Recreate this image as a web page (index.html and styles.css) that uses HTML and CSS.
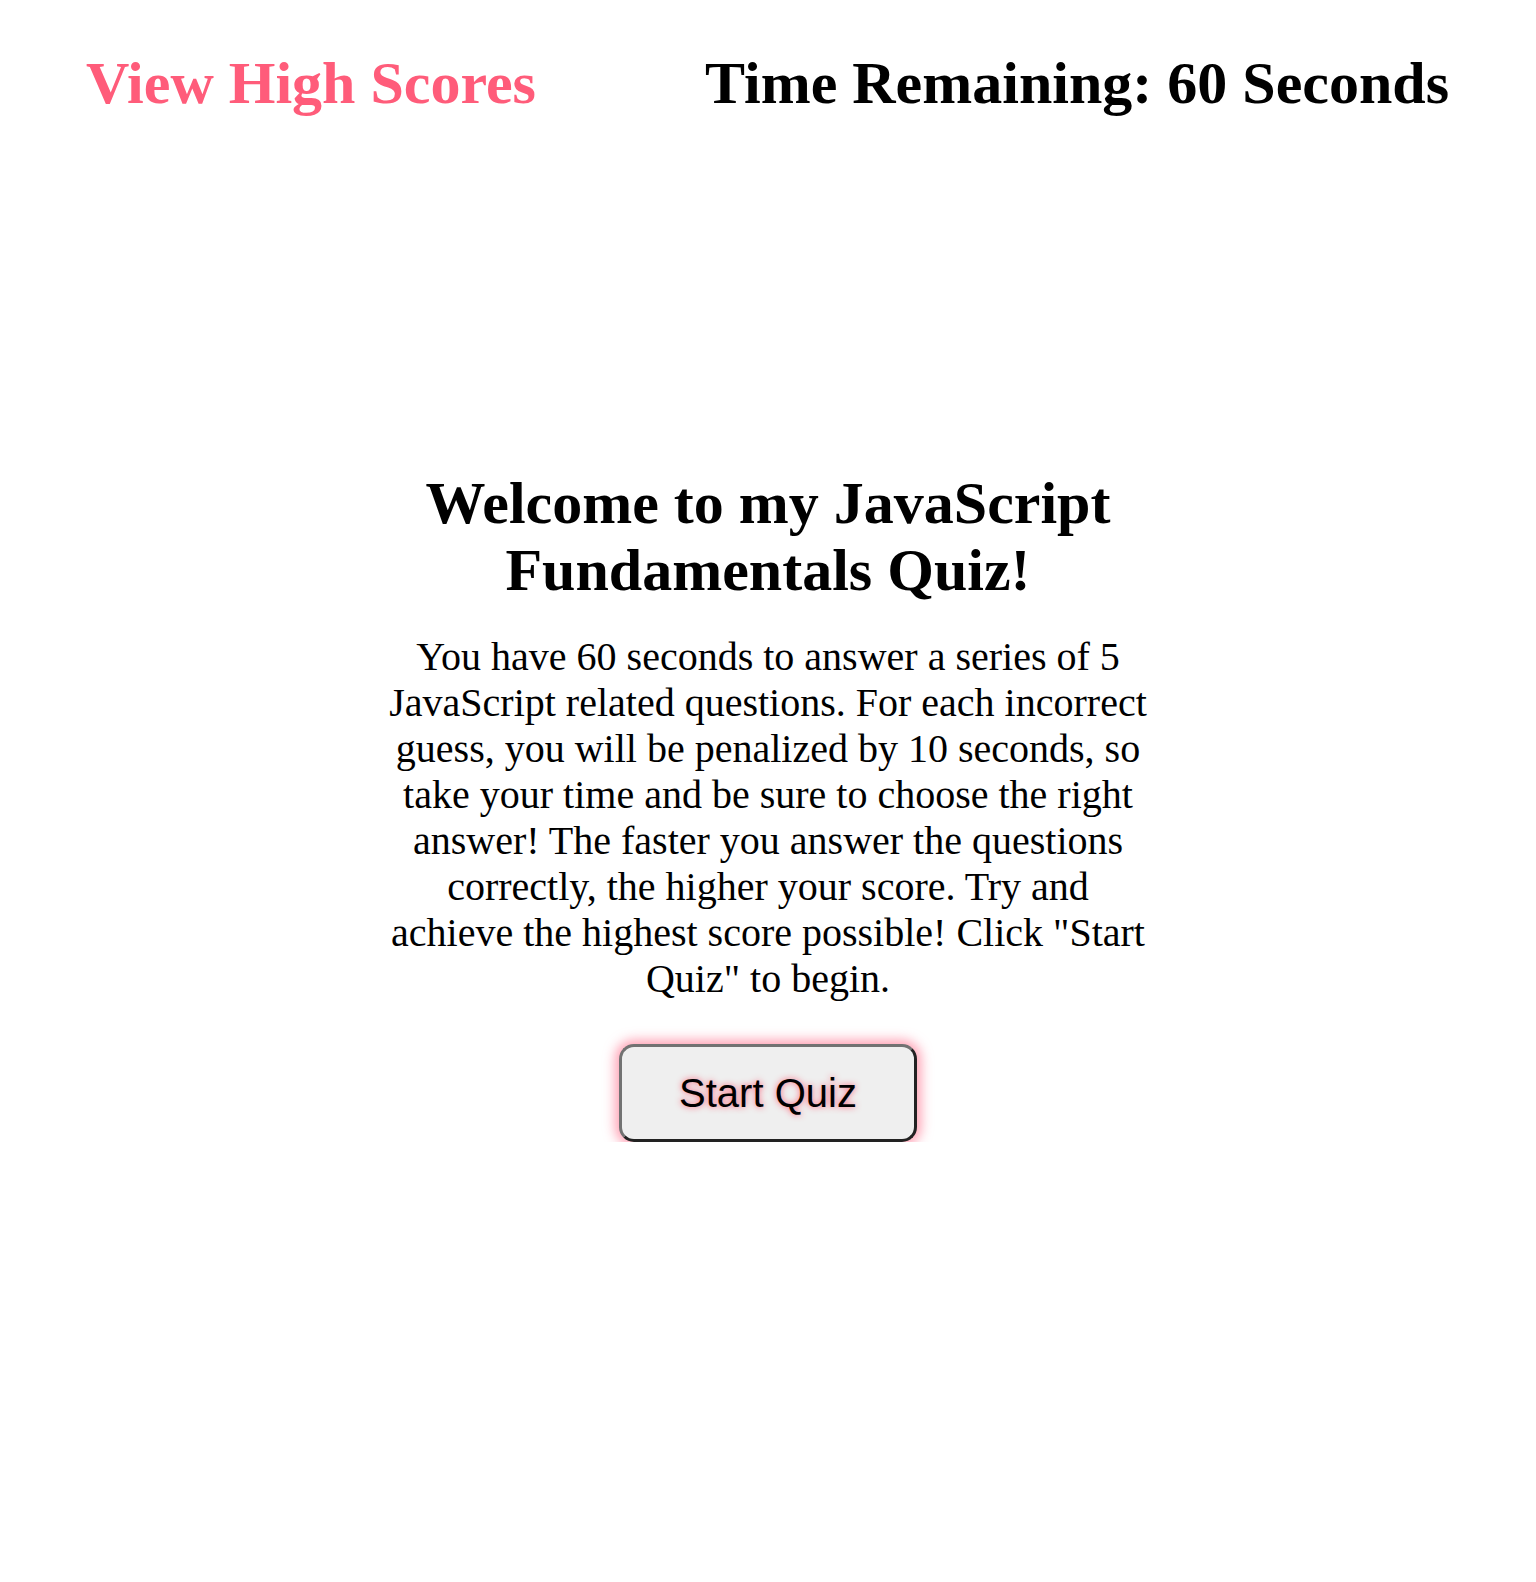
FILE: index.html
```html
<!DOCTYPE html>
<html>
<head>
<meta charset="utf-8">
<link rel="stylesheet" href="styles.css">
</head>
<body>
<header class="top">
  <a class="scores">View High Scores</a>
  <div class="timer">Time Remaining: 60 Seconds</div>
</header>
<main class="intro">
  <h1 class="title">Welcome to my JavaScript Fundamentals Quiz!</h1>
  <p class="desc">You have 60 seconds to answer a series of 5 JavaScript related questions. For each incorrect guess, you will be penalized by 10 seconds, so take your time and be sure to choose the right answer! The faster you answer the questions correctly, the higher your score. Try and achieve the highest score possible! Click "Start Quiz" to begin.</p>
  <button class="start">Start Quiz</button>
</main>
</body>
</html>
```
FILE: styles.css
```css
body {
  margin: 0;
  font-family: "Liberation Serif", "Times New Roman", serif;
  background: #fff;
  color: #000;
}
.top {
  display: flex;
  justify-content: space-between;
  align-items: baseline;
  padding: 49px 87px 0 86px;
}
.scores {
  color: #ff5c7a;
  font-weight: bold;
  font-size: 60px;
}
.timer {
  font-weight: bold;
  font-size: 60px;
}
.intro {
  width: 764px;
  margin: 352px auto 0;
  text-align: center;
  display: flex;
  flex-direction: column;
  align-items: center;
}
.title {
  font-size: 60px;
  margin: 0;
  line-height: 67px;
}
.desc {
  font-size: 40px;
  line-height: 46px;
  margin: 30px 0 0;
}
.start {
  margin-top: 42px;
  width: 298px;
  height: 98px;
  font-family: "Liberation Sans", Arial, sans-serif;
  font-size: 40px;
  background: #efefef;
  border: 3px solid #222;
  border-top-color: #727272;
  border-left-color: #727272;
  border-radius: 15px;
  box-shadow: 0 0 12px 4px rgba(255, 110, 140, 0.65);
  text-shadow: 0 0 6px rgba(255, 70, 100, 0.85);
  color: #000;
}
```
